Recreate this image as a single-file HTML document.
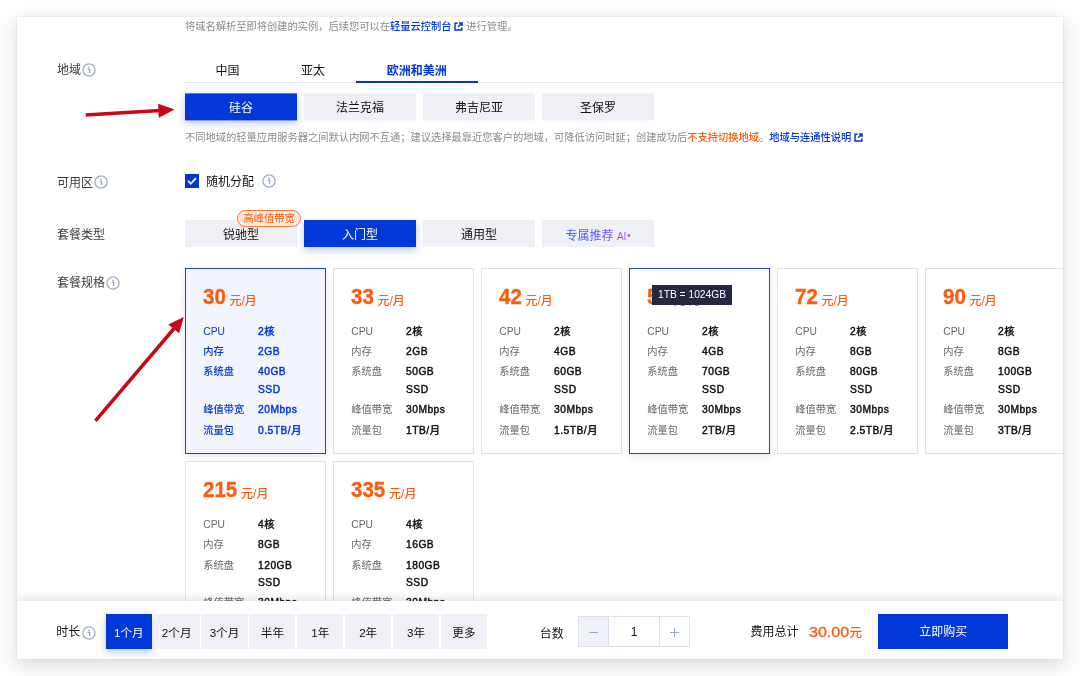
<!DOCTYPE html>
<html lang="zh-CN">
<head>
<meta charset="utf-8">
<title>轻量应用服务器 购买</title>
<style>
*{box-sizing:border-box;margin:0;padding:0}
html,body{width:1080px;height:676px;overflow:hidden;background:#fff}
body{font-family:"Liberation Sans","Noto Sans CJK SC",sans-serif;color:#181818;position:relative;font-size:13px}
.abs{position:absolute}
#card{position:absolute;left:17px;top:17px;width:1045.5px;height:641.5px;background:#fff;overflow:hidden;
  box-shadow:0 0 1px rgba(0,0,0,.05)}
#shadow{position:absolute;left:17px;top:17px;width:1045.5px;height:641.5px;
  box-shadow:0 6px 18px 2px rgba(0,0,0,.13), 0 0 4px rgba(0,0,0,.06)}
/* all children of #card are positioned in page coordinates via inner wrapper */
#in{will-change:transform;position:absolute;left:-17px;top:-17px;width:1080px;height:676px}
.t{position:absolute;white-space:nowrap;line-height:1;margin-top:1.8px}
.lbl{font-size:12px;color:#3c3c3c}
.hint{font-size:10.25px;color:#8a8a8a}
.blue{color:#0038d8}
a{color:#0038d8;text-decoration:none;font-weight:500}
.btn{position:absolute;height:27px;background:#eff0f5;text-align:center;font-size:12px;line-height:31px;color:#111}
.btn.on{background:#0038d8;color:#fff;box-shadow:0 3px 8px rgba(0,56,216,.28)}
.info{position:absolute;width:14px;height:14px}
.spec{position:absolute;width:140.5px;height:185.5px;border:1px solid #dfe1ee;background:#fff}
.spec.sel{border-color:#1746da;background:#f2f5fe;box-shadow:0 2px 8px rgba(0,20,80,.10)}
.spec.hov{border-color:#1746da;box-shadow:0 2px 8px rgba(0,20,80,.10)}
.spec .p{position:absolute;left:17px;top:15px;white-space:nowrap;color:#ff5b0c;font-weight:bold;line-height:26px}
.spec .p b{font-size:22.5px;display:inline-block;transform:scaleX(.91);transform-origin:0 50%;margin-right:-2.9px;-webkit-text-stroke:.35px #ff5b0c}
.spec .p span{font-size:12px;margin-left:4px;font-weight:500;position:relative;top:1px}
.spec .r{position:absolute;left:17px;font-size:10.25px;line-height:14px;color:#686868;white-space:nowrap}
.spec .r i{font-style:normal;position:absolute;left:54.7px;top:0;color:#111;font-weight:normal;-webkit-text-stroke:.45px;letter-spacing:.5px}
.spec.sel .r,.spec.sel .r i{color:#0038d8}
.spec.sel .r{font-weight:500}
.dur{position:absolute;top:614.2px;width:46.2px;height:34.6px;background:#eff0f5;text-align:center;line-height:37px;font-size:11.6px;color:#111}
.dur.on{background:#0038d8;color:#fff;box-shadow:0 3px 8px rgba(0,56,216,.28)}
</style>
</head>
<body>
<div id="shadow"></div>
<div id="card"><div id="in">

<!-- top hint -->
<div class="t hint" style="left:185px;top:20.2px">将域名解析至即将创建的实例，后续您可以在<a>轻量云控制台</a> <svg width="9" height="9" viewBox="0 0 9 9" style="vertical-align:-1px"><path d="M3.6 1.2H1v6.8h6.8V5.4M5 1h3v3M7.8 1.2L4.2 4.8" fill="none" stroke="#0038d8" stroke-width="1.5"/></svg> 进行管理。</div>

<!-- region -->
<div class="t lbl" style="left:57px;top:62.4px">地域</div>
<svg class="info" style="left:82.2px;top:63.4px" viewBox="0 0 14 14"><circle cx="7" cy="7" r="6.1" fill="none" stroke="#a0adc7" stroke-width="1.3"/><circle cx="7" cy="4.3" r=".85" fill="#94a2be"/><path d="M5.7 6.4h1.9v3.7" fill="none" stroke="#94a2be" stroke-width="1.25"/></svg>
<div class="abs" style="left:185px;top:82px;width:900px;height:1px;background:#e4e7f0"></div>
<div class="t" style="left:215.5px;top:63px;font-size:12px;color:#111">中国</div>
<div class="t" style="left:301px;top:63px;font-size:12px;color:#111">亚太</div>
<div class="t blue" style="left:386.8px;top:62.8px;font-size:12px;font-weight:bold">欧洲和美洲</div>
<div class="abs" style="left:356px;top:81.4px;width:121.8px;height:1.8px;background:#0038d8"></div>

<div class="btn on" style="left:185px;top:93px;transform:translateY(.4px);width:112px">硅谷</div>
<div class="btn" style="left:304px;top:93px;transform:translateY(.4px);width:112px">法兰克福</div>
<div class="btn" style="left:423px;top:93px;transform:translateY(.4px);width:112px">弗吉尼亚</div>
<div class="btn" style="left:542px;top:93px;transform:translateY(.4px);width:112px">圣保罗</div>

<div class="t hint" style="left:185px;top:131.5px">不同地域的轻量应用服务器之间默认内网不互通；建议选择最靠近您客户的地域，可降低访问时延；创建成功后<b style="color:#ff5b0c;font-weight:500">不支持切换地域</b>。<a>地域与连通性说明</a> <svg width="9" height="9" viewBox="0 0 9 9" style="vertical-align:-1px"><path d="M3.6 1.2H1v6.8h6.8V5.4M5 1h3v3M7.8 1.2L4.2 4.8" fill="none" stroke="#0038d8" stroke-width="1.5"/></svg></div>

<!-- zone -->
<div class="t lbl" style="left:57px;top:175.5px">可用区</div>
<svg class="info" style="left:94.4px;top:175.1px" viewBox="0 0 14 14"><circle cx="7" cy="7" r="6.1" fill="none" stroke="#a0adc7" stroke-width="1.3"/><circle cx="7" cy="4.3" r=".85" fill="#94a2be"/><path d="M5.7 6.4h1.9v3.7" fill="none" stroke="#94a2be" stroke-width="1.25"/></svg>
<div class="abs" style="left:185px;top:173.9px;width:13.9px;height:13.9px;background:#0038d8"></div>
<svg class="abs" style="left:185px;top:173.9px" width="13.9" height="13.9" viewBox="0 0 13 13"><path d="M2.8 6.4l2.6 2.7 4.8-5.3" fill="none" stroke="#fff" stroke-width="1.6"/></svg>
<div class="t" style="left:206px;top:174.2px;font-size:12px;color:#111">随机分配</div>
<svg class="info" style="left:261.6px;top:173.8px" viewBox="0 0 14 14"><circle cx="7" cy="7" r="6.1" fill="none" stroke="#a0adc7" stroke-width="1.3"/><circle cx="7" cy="4.3" r=".85" fill="#94a2be"/><path d="M5.7 6.4h1.9v3.7" fill="none" stroke="#94a2be" stroke-width="1.25"/></svg>

<!-- plan type -->
<div class="t lbl" style="left:57px;top:227.4px">套餐类型</div>
<div class="btn" style="left:185px;top:220px;width:112px">锐驰型</div>
<div class="btn on" style="left:304px;top:220px;width:112px">入门型</div>
<div class="btn" style="left:423px;top:220px;width:112px">通用型</div>
<div class="btn" style="left:541.5px;top:220px;width:112px;font-size:12px;padding-left:3px"><span style="background:linear-gradient(90deg,#2f62f0 0%,#6a4ff0 60%,#c04be0 100%);-webkit-background-clip:text;background-clip:text;color:transparent">专属推荐 <span style="font-size:10px">AI</span><span style="font-size:7px;vertical-align:2px">✦</span></span></div>
<div class="abs" style="left:237.2px;top:210px;width:63.9px;height:16.7px;border:1px solid #ff7a33;border-radius:8.4px;background:#ffe9dc;color:#ff5b0c;font-size:10.25px;line-height:15.6px;text-align:center">高峰值带宽</div>

<!-- plan spec -->
<div class="t lbl" style="left:57px;top:275.4px">套餐规格</div>
<svg class="info" style="left:106px;top:276.1px" viewBox="0 0 14 14"><circle cx="7" cy="7" r="6.1" fill="none" stroke="#a0adc7" stroke-width="1.3"/><circle cx="7" cy="4.3" r=".85" fill="#94a2be"/><path d="M5.7 6.4h1.9v3.7" fill="none" stroke="#94a2be" stroke-width="1.25"/></svg>

<div class="spec sel" style="left:185.3px;top:268px"><div class="p"><b>30</b><span>元/月</span></div>
<div class="r" style="top:55.5px">CPU<i>2核</i></div><div class="r" style="top:76px">内存<i>2GB</i></div><div class="r" style="top:96.4px">系统盘<i>40GB</i></div><div class="r" style="top:113.7px">&nbsp;<i>SSD</i></div><div class="r" style="top:134px">峰值带宽<i>20Mbps</i></div><div class="r" style="top:154.5px">流量包<i>0.5TB/月</i></div></div>

<div class="spec" style="left:333.3px;top:268px"><div class="p"><b>33</b><span>元/月</span></div>
<div class="r" style="top:55.5px">CPU<i>2核</i></div><div class="r" style="top:76px">内存<i>2GB</i></div><div class="r" style="top:96.4px">系统盘<i>50GB</i></div><div class="r" style="top:113.7px">&nbsp;<i>SSD</i></div><div class="r" style="top:134px">峰值带宽<i>30Mbps</i></div><div class="r" style="top:154.5px">流量包<i>1TB/月</i></div></div>

<div class="spec" style="left:481.3px;top:268px"><div class="p"><b>42</b><span>元/月</span></div>
<div class="r" style="top:55.5px">CPU<i>2核</i></div><div class="r" style="top:76px">内存<i>4GB</i></div><div class="r" style="top:96.4px">系统盘<i>60GB</i></div><div class="r" style="top:113.7px">&nbsp;<i>SSD</i></div><div class="r" style="top:134px">峰值带宽<i>30Mbps</i></div><div class="r" style="top:154.5px">流量包<i>1.5TB/月</i></div></div>

<div class="spec hov" style="left:629.3px;top:268px"><div class="p"><b>54</b><span>元/月</span></div>
<div class="r" style="top:55.5px">CPU<i>2核</i></div><div class="r" style="top:76px">内存<i>4GB</i></div><div class="r" style="top:96.4px">系统盘<i>70GB</i></div><div class="r" style="top:113.7px">&nbsp;<i>SSD</i></div><div class="r" style="top:134px">峰值带宽<i>30Mbps</i></div><div class="r" style="top:154.5px">流量包<i>2TB/月</i></div></div>

<div class="spec" style="left:777.3px;top:268px"><div class="p"><b>72</b><span>元/月</span></div>
<div class="r" style="top:55.5px">CPU<i>2核</i></div><div class="r" style="top:76px">内存<i>8GB</i></div><div class="r" style="top:96.4px">系统盘<i>80GB</i></div><div class="r" style="top:113.7px">&nbsp;<i>SSD</i></div><div class="r" style="top:134px">峰值带宽<i>30Mbps</i></div><div class="r" style="top:154.5px">流量包<i>2.5TB/月</i></div></div>

<div class="spec" style="left:925.3px;top:268px"><div class="p"><b>90</b><span>元/月</span></div>
<div class="r" style="top:55.5px">CPU<i>2核</i></div><div class="r" style="top:76px">内存<i>8GB</i></div><div class="r" style="top:96.4px">系统盘<i>100GB</i></div><div class="r" style="top:113.7px">&nbsp;<i>SSD</i></div><div class="r" style="top:134px">峰值带宽<i>30Mbps</i></div><div class="r" style="top:154.5px">流量包<i>3TB/月</i></div></div>

<div class="spec" style="left:185.3px;top:461.3px"><div class="p"><b style="margin-right:-3.8px">215</b><span>元/月</span></div>
<div class="r" style="top:55.5px">CPU<i>4核</i></div><div class="r" style="top:76px">内存<i>8GB</i></div><div class="r" style="top:96.4px">系统盘<i>120GB</i></div><div class="r" style="top:113.7px">&nbsp;<i>SSD</i></div><div class="r" style="top:134px">峰值带宽<i>30Mbps</i></div><div class="r" style="top:154.5px">流量包<i>3TB/月</i></div></div>

<div class="spec" style="left:333.3px;top:461.3px"><div class="p"><b style="margin-right:-3.8px">335</b><span>元/月</span></div>
<div class="r" style="top:55.5px">CPU<i>4核</i></div><div class="r" style="top:76px">内存<i>16GB</i></div><div class="r" style="top:96.4px">系统盘<i>180GB</i></div><div class="r" style="top:113.7px">&nbsp;<i>SSD</i></div><div class="r" style="top:134px">峰值带宽<i>30Mbps</i></div><div class="r" style="top:154.5px">流量包<i>4TB/月</i></div></div>

<!-- tooltip -->
<div class="abs" style="left:652px;top:284.8px;width:80px;height:20px;background:#24273f;color:#fff;font-size:10.25px;line-height:20.5px;text-align:center;white-space:nowrap">1TB = 1024GB</div>

<!-- arrows -->
<svg class="abs" style="left:0;top:0" width="1080" height="676" viewBox="0 0 1080 676">
<path d="M85.7 114.9L160 110.4" stroke="#cc0512" stroke-width="3.5" fill="none"/>
<path d="M174.6 109.6L158.2 103.8L158.7 117.8Z" fill="#cc0512"/>
<path d="M95.4 420.8L174.5 328" stroke="#cc0512" stroke-width="3.5" fill="none"/>
<path d="M183.8 316.9L168.3 324.5L179.1 333.3Z" fill="#cc0512"/>
</svg>

<!-- bottom bar -->
<div class="abs" style="left:17px;top:601.2px;width:1046px;height:59px;background:#fff;box-shadow:0 -3px 8px rgba(40,50,110,.13)"></div>
<div class="t lbl" style="left:56.3px;top:624.5px;color:#141414;font-weight:400">时长</div>
<svg class="info" style="left:82.2px;top:625.6px" viewBox="0 0 14 14"><circle cx="7" cy="7" r="6.1" fill="none" stroke="#a0adc7" stroke-width="1.3"/><circle cx="7" cy="4.3" r=".85" fill="#94a2be"/><path d="M5.7 6.4h1.9v3.7" fill="none" stroke="#94a2be" stroke-width="1.25"/></svg>
<div class="dur on" style="left:105.7px">1个月</div>
<div class="dur" style="left:153.6px">2个月</div>
<div class="dur" style="left:201.4px">3个月</div>
<div class="dur" style="left:249.3px">半年</div>
<div class="dur" style="left:297.2px">1年</div>
<div class="dur" style="left:345.1px">2年</div>
<div class="dur" style="left:392.9px">3年</div>
<div class="dur" style="left:440.8px">更多</div>

<div class="t lbl" style="left:539.8px;top:626px;color:#141414;font-weight:400">台数</div>
<div class="abs" style="left:578.3px;top:616px;width:111.5px;height:30.5px;border:1px solid #dce0ec;background:#fff"></div>
<div class="abs" style="left:579.3px;top:617px;width:29.3px;height:28.5px;background:#eff1f6;border-right:1px solid #dce0ec"></div>
<div class="abs" style="left:659.3px;top:617px;width:1px;height:28.5px;background:#dce0ec"></div>
<div class="abs" style="left:589.3px;top:631.7px;width:8.6px;height:1.5px;background:#9ba8c3"></div>
<div class="abs" style="left:669.7px;top:631.6px;width:9px;height:1.5px;background:#9ba8c3"></div>
<div class="abs" style="left:673.5px;top:627.8px;width:1.5px;height:9px;background:#9ba8c3"></div>
<div class="t" style="left:630.8px;top:624.5px;font-size:12px;color:#111">1</div>

<div class="t lbl" style="left:750.5px;top:624.5px;color:#141414;font-weight:400">费用总计</div>
<div class="t" style="left:809px;top:622.9px;font-size:14.4px;color:#ff5b0c"><span style="display:inline-block;transform:scaleX(1.115);transform-origin:0 50%;-webkit-text-stroke:.3px #ff5b0c;margin-right:4.6px">30.00</span><span style="font-size:12.5px;font-weight:500">元</span></div>
<div class="abs" style="left:878.3px;top:614.3px;width:130px;height:34.3px;background:#0038d8;color:#fff;text-align:center;line-height:36.5px;font-size:12px">立即购买</div>

</div></div>
</body>
</html>
